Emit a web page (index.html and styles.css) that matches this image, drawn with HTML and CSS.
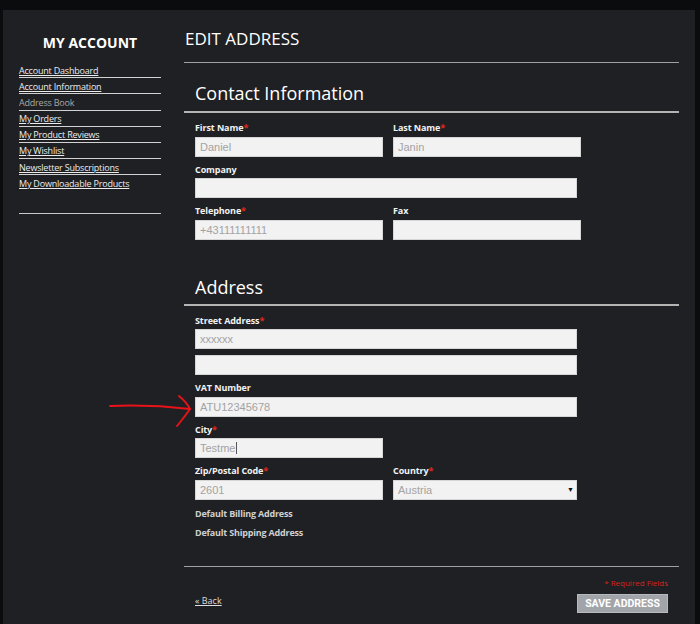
FILE: index.html
```html
<!DOCTYPE html>
<html>
<head>
<meta charset="utf-8">
<link rel="stylesheet" href="styles.css">
</head>
<body>
<div class="page">
  <aside class="sidebar">
    <h2 class="side-title">MY ACCOUNT</h2>
    <ul class="side-nav">
      <li><a href="#">Account Dashboard</a></li>
      <li><a href="#">Account Information</a></li>
      <li><span class="current">Address Book</span></li>
      <li><a href="#">My Orders</a></li>
      <li><a href="#">My Product Reviews</a></li>
      <li><a href="#">My Wishlist</a></li>
      <li><a href="#">Newsletter Subscriptions</a></li>
      <li class="last"><a href="#">My Downloadable Products</a></li>
    </ul>
    <div class="side-end"></div>
  </aside>

  <main class="main">
    <h1 class="page-title">EDIT ADDRESS</h1>

    <h2 class="section-title">Contact Information</h2>
    <div class="fields">
      <div class="row two">
        <div class="field">
          <label class="lbl">First Name<em>*</em></label>
          <div class="input">Daniel</div>
        </div>
        <div class="field">
          <label class="lbl">Last Name<em>*</em></label>
          <div class="input">Janin</div>
        </div>
      </div>
      <div class="row">
        <div class="field">
          <label class="lbl">Company</label>
          <div class="input wide"></div>
        </div>
      </div>
      <div class="row two">
        <div class="field">
          <label class="lbl">Telephone<em>*</em></label>
          <div class="input">+43111111111</div>
        </div>
        <div class="field">
          <label class="lbl">Fax</label>
          <div class="input"></div>
        </div>
      </div>
    </div>

    <h2 class="section-title addr">Address</h2>
    <div class="fields">
      <div class="row">
        <div class="field">
          <label class="lbl">Street Address<em>*</em></label>
          <div class="input wide">xxxxxx</div>
          <div class="input wide second"></div>
        </div>
      </div>
      <div class="row">
        <div class="field">
          <label class="lbl">VAT Number</label>
          <div class="input wide">ATU12345678</div>
        </div>
      </div>
      <div class="row">
        <div class="field">
          <label class="lbl">City<em>*</em></label>
          <div class="input">Testme<span class="caret"></span></div>
        </div>
      </div>
      <div class="row two">
        <div class="field">
          <label class="lbl">Zip/Postal Code<em>*</em></label>
          <div class="input">2601</div>
        </div>
        <div class="field">
          <label class="lbl">Country<em>*</em></label>
          <div class="input select">Austria<span class="arrow">&#9660;</span></div>
        </div>
      </div>
      <p class="default">Default Billing Address</p>
      <p class="default">Default Shipping Address</p>
    </div>

    <div class="actions">
      <p class="required">* Required Fields</p>
      <div class="buttons">
        <a href="#" class="back">&laquo; Back</a>
        <button class="save" type="button">SAVE ADDRESS</button>
      </div>
    </div>
  </main>

  <svg class="annot" width="90" height="34" viewBox="0 0 90 34">
    <path d="M1 11 C 25 10, 55 11, 81 14" fill="none" stroke="#e8131a" stroke-width="1.9" stroke-linecap="round"/>
    <path d="M70 1 C 75 5, 79 10, 81 14 C 77 20, 72 26, 68 31" fill="none" stroke="#e8131a" stroke-width="1.9" stroke-linecap="round"/>
  </svg>
</div>
</body>
</html>
```

FILE: styles.css
```css
html, body {
  margin: 0;
  padding: 0;
  background: #0b0c0e;
}
body {
  font-family: "Open Sans", "Liberation Sans", sans-serif;
  color: #e6e6e6;
}
.page {
  position: relative;
  margin: 10px 0 0 3px;
  width: 692px;
  min-height: 614px;
  background: #1f2023;
  display: flex;
  padding-left: 16px;
  box-sizing: border-box;
}
.sidebar {
  width: 142px;
  flex: none;
}
.side-title {
  margin: 23px 0 0 0;
  font-size: 14px;
  line-height: 20px;
  font-weight: 700;
  color: #fff;
  text-align: center;
}
.side-nav {
  list-style: none;
  margin: 9px 0 0 0;
  padding: 0;
}
.side-nav li {
  height: 16.2px;
  box-sizing: border-box;
  padding-top: 1.5px;
  border-bottom: 1px solid #d2d2d2;
  font-size: 9px;
  line-height: 13px;
  letter-spacing: -0.2px;
}
.side-nav li.last {
  border-bottom: none;
}
.side-nav a {
  color: #ececec;
  text-decoration: underline;
}
.side-nav .current {
  color: #a8a8a8;
}
.side-end {
  margin-top: 21px;
  border-bottom: 1px solid #c8c8c8;
}
.main {
  width: 495px;
  margin-left: 23px;
  flex: none;
}
.page-title {
  margin: 17px 0 0 0;
  padding: 0 0 11px 1px;
  font-size: 17px;
  line-height: 24px;
  font-weight: 400;
  color: #fff;
  border-bottom: 1px solid #a0a0a0;
}
.section-title {
  margin: 18px 0 0 0;
  padding: 0 0 6px 11px;
  font-size: 18px;
  line-height: 24px;
  font-weight: 400;
  color: #fff;
  border-bottom: 2px solid #b4b4b4;
}
.section-title.addr {
  margin-top: 35px;
  padding-bottom: 5px;
}
.fields {
  padding: 8px 0 0 11px;
}
.row {
  display: flex;
  gap: 10px;
  margin-bottom: 6px;
}
.field {
  display: flex;
  flex-direction: column;
}
.lbl {
  font-size: 9px;
  line-height: 13px;
  font-weight: 700;
  color: #f2f2f2;
  margin-bottom: 2.5px;
  letter-spacing: -0.1px;
}
.lbl em {
  font-style: normal;
  color: #e0261f;
}
.input {
  width: 188px;
  height: 20px;
  box-sizing: border-box;
  background: #f2f2f2;
  border: 1px solid #d6d6d6;
  font-family: "Liberation Sans", Arial, sans-serif;
  font-size: 11px;
  line-height: 18px;
  color: #a3a3a3;
  padding-left: 4px;
  display: flex;
  align-items: center;
}
.input.wide {
  width: 382px;
}
.input.second {
  margin-top: 6px;
}
.input.select {
  width: 184px;
  position: relative;
}
.arrow {
  position: absolute;
  right: 2px;
  top: 0;
  font-size: 7px;
  color: #111;
  line-height: 18px;
}
.caret {
  display: inline-block;
  width: 1px;
  height: 12px;
  background: #555;
  margin-left: 1px;
}
.default {
  margin: 7px 0 0 0;
  font-size: 9px;
  line-height: 13px;
  font-weight: 700;
  color: #cfcfcf;
  letter-spacing: -0.2px;
}
.default + .default {
  margin-top: 6px;
}
.actions {
  margin-top: 27px;
  border-top: 1px solid #a0a0a0;
  padding: 10px 11px 0 11px;
}
.required {
  margin: 0;
  text-align: right;
  font-size: 8px;
  line-height: 12px;
  color: #d9231c;
}
.buttons {
  display: flex;
  justify-content: space-between;
  align-items: center;
  margin-top: 5px;
}
.back {
  font-size: 9px;
  line-height: 13px;
  color: #dedede;
  text-decoration: underline;
  margin-top: -6px;
}
.save {
  width: 91px;
  height: 19px;
  margin: 0;
  padding: 0;
  border: 1px solid #b6b9bd;
  background: #a1a4a9;
  color: #fff;
  font-family: Roboto, "Liberation Sans", sans-serif;
  font-weight: 700;
  font-size: 10.5px;
  line-height: 17px;
  cursor: pointer;
}
.annot {
  position: absolute;
  left: 106px;
  top: 385px;
}
```
